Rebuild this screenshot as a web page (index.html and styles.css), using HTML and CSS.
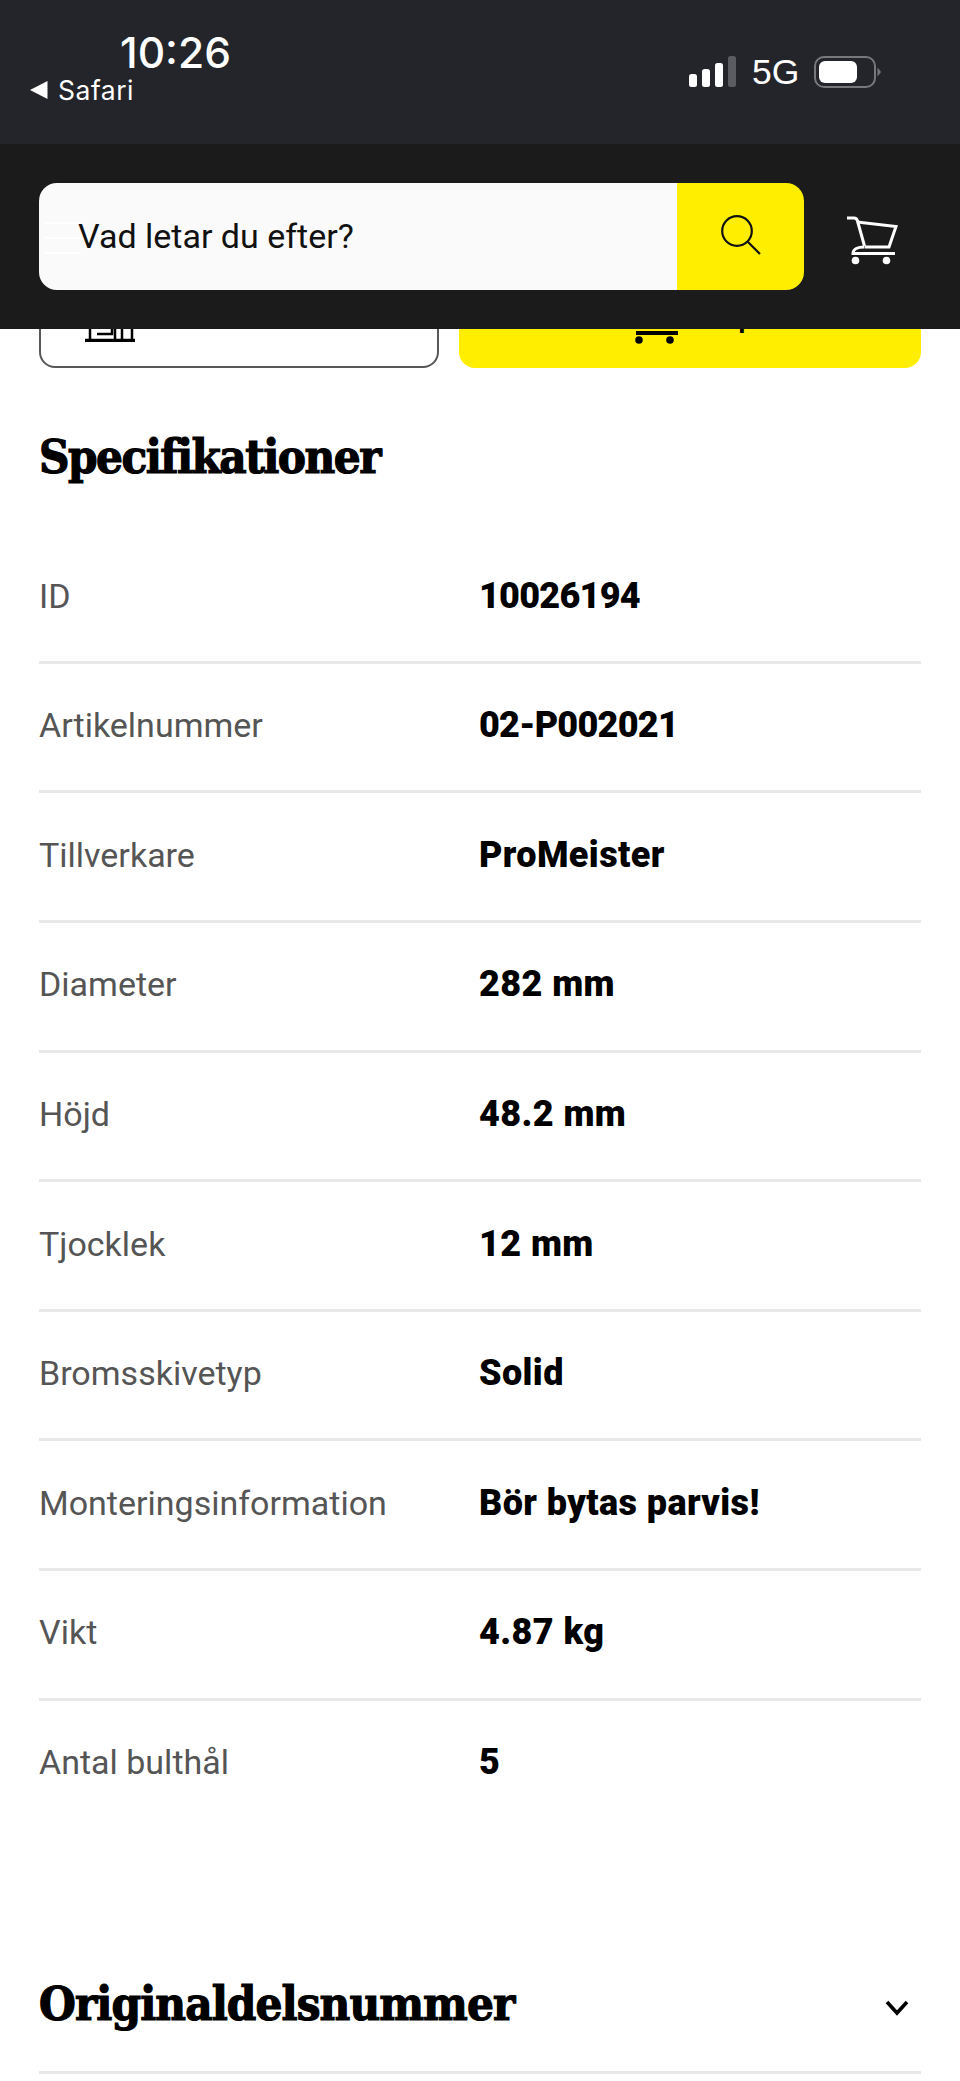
FILE: index.html
```html
<!DOCTYPE html>
<html lang="sv">
<head>
<meta charset="utf-8">
<title>Specifikationer</title>
<link rel="stylesheet" href="styles.css">
</head>
<body>
<div class="status">
  <div class="status-left">
    <div class="clock">10:26</div>
    <div class="back"><svg class="back-arrow" viewBox="0 0 18 18"><path d="M0 9 17.500 0V18Z"/></svg><span>Safari</span></div>
  </div>
  <div class="status-right">
    <svg class="signal" viewBox="0 0 48 31"><rect x="0" y="18" width="8" height="13" rx="2.500" fill="#fff"/><rect x="13" y="13" width="8" height="18" rx="2.500" fill="#fff"/><rect x="26" y="7" width="8" height="24" rx="2.500" fill="#fff"/><rect x="39" y="0" width="8" height="31" rx="2.500" fill="#5b5c61"/></svg>
    <span class="net">5G</span>
    <svg class="battery" viewBox="0 0 68 33"><rect x="1" y="1" width="60" height="30" rx="9" fill="none" stroke="#77787c" stroke-width="2"/><rect x="5" y="5" width="38" height="22" rx="6" fill="#fff"/><path d="M63.500 11.500 67 16 63.500 20.500Z" fill="#77787c"/></svg>
  </div>
</div>
<header class="topbar">
  <div class="search">
    <div class="search-input">Vad letar du efter?</div>
    <div class="search-btn">
      <svg class="search-icon" viewBox="0 0 40 40"><circle cx="16" cy="16" r="14.800" fill="none" stroke="#111" stroke-width="2.200"/><path d="M27 27 39 39" stroke="#111" stroke-width="2.200" fill="none"/></svg>
    </div>
    <div class="burger"><i></i><i></i><i></i></div>
  </div>
  <svg class="cart" viewBox="0 0 52 50"><path d="M1 2H8C10 2 11 3 11.500 5L18.500 30" fill="none" stroke="#fff" stroke-width="3"/><path d="M11 6 50 10.500 43 31H18.500" fill="none" stroke="#fff" stroke-width="3"/><path d="M18 31C12 31 7 33 7 37.500H49" fill="none" stroke="#fff" stroke-width="3"/><circle cx="9.500" cy="44.500" r="3.800" fill="#fff"/><circle cx="40.500" cy="44.500" r="3.800" fill="#fff"/></svg>
</header>
<main class="content">
  <div class="actions">
    <div class="btn btn-outline">
      <svg class="store" viewBox="0 0 50 60"><path d="M0 58.500H51" stroke="#000" stroke-width="3.500"/><path d="M5 58V30M12 52H27V30M30 58V30M37 58V30M47 58V30" stroke="#000" stroke-width="2.500" fill="none"/></svg>
    </div>
    <div class="btn btn-buy">
      <svg class="buy-cart" viewBox="0 0 60 50"><path d="M12 37H54" fill="none" stroke="#000" stroke-width="4"/><circle cx="15" cy="44" r="3.800"/><circle cx="46" cy="44" r="3.800"/></svg>
      <span class="buy-label">Köp</span>
    </div>
  </div>
  <section class="specs">
    <h2 class="heading spec-title">Specifikationer</h2>
    <dl class="spec-list">
      <div class="row"><dt>ID</dt><dd class="code">10026194</dd></div>
      <div class="row"><dt>Artikelnummer</dt><dd class="code">02-P002021</dd></div>
      <div class="row"><dt>Tillverkare</dt><dd>ProMeister</dd></div>
      <div class="row"><dt>Diameter</dt><dd>282 mm</dd></div>
      <div class="row"><dt>Höjd</dt><dd>48.2 mm</dd></div>
      <div class="row"><dt>Tjocklek</dt><dd>12 mm</dd></div>
      <div class="row"><dt>Bromsskivetyp</dt><dd>Solid</dd></div>
      <div class="row"><dt>Monteringsinformation</dt><dd>Bör bytas parvis!</dd></div>
      <div class="row"><dt>Vikt</dt><dd>4.87 kg</dd></div>
      <div class="row last"><dt>Antal bulthål</dt><dd>5</dd></div>
    </dl>
  </section>
  <section class="accordion">
    <h2 class="heading acc-title">Originaldelsnummer</h2>
    <svg class="chev" viewBox="0 0 24 16"><path d="M2 2 12 13 22 2" fill="none" stroke="#000" stroke-width="3.600"/></svg>
  </section>
</main>
</body>
</html>
```
FILE: styles.css
```css
* { box-sizing: border-box; }
html, body { margin: 0; padding: 0; }
body {
  width: 960px;
  height: 2081px;
  overflow: hidden;
  background: #fff;
  font-family: Roboto, "Liberation Sans", sans-serif;
  color: #000;
}
.status {
  height: 144px;
  background: #24252b;
  color: #fff;
  display: flex;
  justify-content: space-between;
  padding: 0 78px 0 30px;
}
.status-left { display: flex; flex-direction: column; padding-top: 28px; }
.clock {
  font-family: Inter, sans-serif;
  font-size: 42.5px;
  font-weight: 500;
  line-height: 50px;
  margin-left: 90px;
}
.back {
  display: flex;
  align-items: center;
  gap: 10px;
  font-family: Inter, sans-serif;
  font-size: 26.5px;
  line-height: 30px;
  letter-spacing: 0.5px;
  margin-top: -3px;
}
.back-arrow { width: 18px; height: 18px; fill: #fff; }
.status-right { display: flex; align-items: flex-start; padding-top: 56px; }
.signal { width: 48px; height: 31px; margin-right: 15px; }
.net { font-family: "Liberation Sans", sans-serif; font-size: 35.5px; line-height: 33px; width: 62px; }
.battery { width: 68px; height: 33px; }
.topbar {
  position: relative;
  z-index: 2;
  height: 185px;
  background: #1b1b1c;
  display: flex;
  align-items: flex-start;
  padding: 39px 0 0 39px;
}
.search {
  position: relative;
  width: 765px;
  height: 107px;
  display: flex;
  border-radius: 18px;
  overflow: hidden;
}
.search-input {
  flex: 1;
  background: #fafafa;
  color: #111;
  font-size: 34px;
  line-height: 107px;
  padding-left: 39px;
}
.search-btn {
  width: 127px;
  background: #ffee00;
  display: flex;
  justify-content: center;
  padding-top: 32px;
}
.search-icon { width: 40px; height: 40px; }
.burger {
  position: absolute;
  left: 6px;
  top: 39px;
  width: 36px;
  display: flex;
  flex-direction: column;
  gap: 13px;
}
.burger i { display: block; height: 2px; background: #fff; }
.cart { width: 52px; height: 50px; margin: 33px 0 0 42px; }
.actions {
  display: flex;
  gap: 20px;
  margin: -60px 39px 0;
}
.btn { height: 99px; border-radius: 16px; display: flex; align-items: center; }
.btn-outline {
  width: 400px;
  border: 2px solid #58585a;
  padding-left: 44px;
  align-items: flex-start;
}
.store { width: 50px; height: 60px; margin-top: 11px; }
.btn-buy {
  flex: 1;
  background: #ffee00;
  justify-content: center;
  gap: 16px;
}
.buy-cart { width: 60px; height: 50px; margin-top: 4px; }
.buy-label { font-size: 32px; font-weight: 500; line-height: 40px; margin-top: -6px; }
.specs { padding: 0 39px; }
.heading {
  margin: 0;
  font-family: "DejaVu Serif", serif;
  font-stretch: condensed;
  font-weight: 900;
  font-size: 47px;
  line-height: 50px;
  -webkit-text-stroke: 1.2px #000;
  color: #000;
}
.spec-title { padding-top: 64px; letter-spacing: -1.5px; }
.acc-title { letter-spacing: -0.9px; }
.spec-list { margin: 52.3px 0 0; }
.row {
  height: 129.6px;
  padding-bottom: 4px;
  display: flex;
  align-items: center;
  border-bottom: 3px solid #e8e8e8;
}
.row dt { width: 440px; font-size: 34px; color: #555; }
.row dd { margin: 0; font-size: 36px; font-weight: 900; letter-spacing: 0.4px; }
.row dd.code { letter-spacing: -0.75px; }
.row.last { border-bottom-color: transparent; }
.accordion {
  margin: 128.3px 39px 0;
  height: 115px;
  padding-bottom: 22px;
  display: flex;
  justify-content: space-between;
  align-items: center;
  border-bottom: 3px solid #e8e8e8;
}
.chev { width: 24px; height: 16px; margin-right: 12px; margin-top: 8px; }
```
